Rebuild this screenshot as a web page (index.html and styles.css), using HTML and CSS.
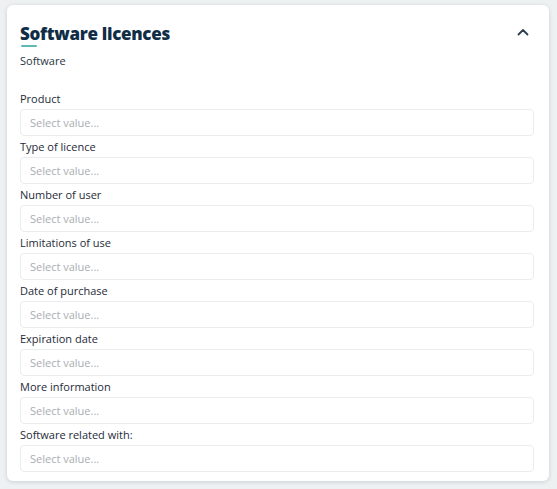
FILE: index.html
```html
<!DOCTYPE html>
<html lang="en">
<head>
<meta charset="utf-8">
<title>Software licences</title>
<link rel="stylesheet" href="styles.css">
</head>
<body>
<section class="card">
  <header class="card-header">
    <div class="heading">
      <h2 class="title">Software licences</h2>
      <span class="title-bar"></span>
      <p class="subtitle">Software</p>
    </div>
    <button class="collapse" aria-label="Collapse">
      <svg width="12" height="8" viewBox="0 0 12 8"><path d="M1.5 6.5 L6 2 L10.5 6.5" fill="none" stroke="#2c3e50" stroke-width="1.8" stroke-linecap="round" stroke-linejoin="round"/></svg>
    </button>
  </header>
  <div class="fields">
    <div class="field"><label class="label">Product</label><div class="select">Select value...</div></div>
    <div class="field"><label class="label">Type of licence</label><div class="select">Select value...</div></div>
    <div class="field"><label class="label">Number of user</label><div class="select">Select value...</div></div>
    <div class="field"><label class="label">Limitations of use</label><div class="select">Select value...</div></div>
    <div class="field"><label class="label">Date of purchase</label><div class="select">Select value...</div></div>
    <div class="field"><label class="label">Expiration date</label><div class="select">Select value...</div></div>
    <div class="field"><label class="label">More information</label><div class="select">Select value...</div></div>
    <div class="field"><label class="label">Software related with:</label><div class="select">Select value...</div></div>
  </div>
</section>
</body>
</html>
```

FILE: styles.css
```css
* { box-sizing: border-box; }
html, body { margin: 0; }
body {
  background: #eef1f2;
  padding: 5px 8px 8px 7px;
  font-family: "Open Sans", "Noto Sans", sans-serif;
  color: #1e2b38;
}
.card {
  background: #fff;
  border-radius: 6px;
  box-shadow: 0 1px 4px rgba(40, 60, 80, 0.18);
  padding: 19px 15px 9px 13px;
}
.card-header {
  display: flex;
  justify-content: space-between;
  align-items: flex-start;
}
.heading { display: flex; flex-direction: column; }
.title {
  margin: 0;
  font-size: 17px;
  line-height: 20px;
  font-weight: 800;
  color: #0f2d47;
  letter-spacing: -0.3px;
}
.title-bar {
  display: block;
  width: 16px;
  height: 2px;
  margin-top: 1px;
  margin-left: 1px;
  background: #5fb8b6;
  border-radius: 1px;
}
.subtitle {
  margin: 6px 0 0;
  font-size: 11px;
  line-height: 16px;
  color: #2a3642;
}
.collapse {
  border: 0;
  background: none;
  padding: 0;
  margin: 2px 3px 0 0;
  width: 16px;
  height: 12px;
  display: flex;
  align-items: center;
  justify-content: center;
}
.fields {
  display: flex;
  flex-direction: column;
  gap: 3px;
  margin-top: 22px;
}
.field { display: flex; flex-direction: column; gap: 2px; }
.label {
  font-size: 11px;
  line-height: 16px;
  color: #1e2b38;
}
.select {
  height: 27px;
  border: 1px solid #e9edef;
  border-radius: 4px;
  padding: 0 9px;
  display: flex;
  align-items: center;
  font-size: 11px;
  color: #a9adb1;
}
```
